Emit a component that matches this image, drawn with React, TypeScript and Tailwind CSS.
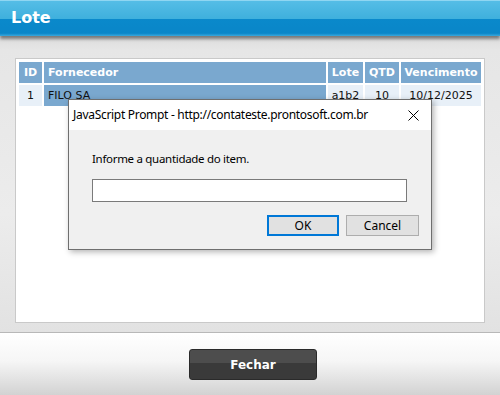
export default function App() {
  return (
    <div className="relative w-[500px] h-[395px] overflow-hidden bg-[#e4e4e4] font-['DejaVu_Sans',sans-serif]">
      {/* header */}
      <div className="relative z-10 h-[36px] border-t border-[#8fd6f2] bg-[linear-gradient(#55bde6_0%,#3fb0dd_50%,#0a89cb_52%,#0a86c8_92%,#3aa8dd_100%)] shadow-[0_3px_3px_rgba(0,0,0,0.45)]">
        <h1 className="pl-[11px] pt-[8px] text-[16px] leading-[18px] font-bold text-white">Lote</h1>
      </div>

      {/* content */}
      <div className="h-[297px] bg-[linear-gradient(#dcdcdc_0px,#e6e6e6_14px,#ececec_60%,#e2e2e2_100%)] px-[15px] pt-[22px] border-b border-[#b8b8b8]">
        <div className="h-[265px] bg-white border border-[#c9c9c9] px-[1px] pt-[1px]">
          <table className="w-full border-separate border-spacing-[2px] text-[11px] leading-[13px]">
            <thead>
              <tr className="text-white font-bold">
                <th className="w-[23px] h-[21px] bg-[#7aa8cf] text-center">ID</th>
                <th className="bg-[#7aa8cf] text-left pl-[4px]">Fornecedor</th>
                <th className="w-[35px] bg-[#7aa8cf] text-center">Lote</th>
                <th className="w-[34px] bg-[#7aa8cf] text-center">QTD</th>
                <th className="w-[80px] bg-[#7aa8cf] text-center">Vencimento</th>
              </tr>
            </thead>
            <tbody>
              <tr className="text-[#111]">
                <td className="h-[21px] bg-[#e8f0f8] text-center">1</td>
                <td className="bg-[#7aa8cf] pl-[4px]">FILO SA</td>
                <td className="bg-[#e8f0f8] text-center">a1b2</td>
                <td className="bg-[#e8f0f8] text-center">10</td>
                <td className="bg-[#e8f0f8] text-center">10/12/2025</td>
              </tr>
            </tbody>
          </table>
        </div>
      </div>

      {/* footer */}
      <div className="h-[62px] bg-[linear-gradient(#ffffff_0%,#f6f6f6_45%,#d2d2d2_100%)] flex justify-center pt-[16px] pl-[6px]">
        <button className="w-[128px] h-[31px] rounded-[3px] border border-[#2a2a2a] bg-[linear-gradient(#4d4d4d_0%,#4d4d4d_45%,#3a3a3a_46%,#3a3a3a_100%)] text-white font-bold text-[12px] font-['DejaVu_Sans',sans-serif]">
          Fechar
        </button>
      </div>

      {/* prompt dialog */}
      <div className="absolute left-[68px] top-[99px] w-[364px] h-[151px] border border-[#6f6f6f] bg-[#f0f0f0] shadow-[2px_2px_6px_rgba(0,0,0,0.3)] font-['Noto_Sans',sans-serif] text-[12px] text-black">
        <div className="h-[30px] bg-white flex items-center justify-between pl-[4px] pr-[12px]">
          <span className="tracking-[-0.3px]">JavaScript Prompt - http://contateste.prontosoft.com.br</span>
          <svg width="11" height="11" viewBox="0 0 11 11" className="stroke-black">
            <path d="M0.5 0.5 L10.5 10.5 M10.5 0.5 L0.5 10.5" strokeWidth="1" />
          </svg>
        </div>
        <div className="px-[23px] pt-[21px]">
          <p className="text-[11.5px] leading-[16px] tracking-[-0.3px]">Informe a quantidade do item.</p>
          <div className="mt-[12px] h-[23px] w-[315px] border border-[#7a7a7a] bg-white" />
          <div className="mt-[13px] flex justify-end gap-[7px] mr-[-11px]">
            <button className="w-[72px] h-[21px] border-2 border-[#0078d7] bg-[#e1e1e1] leading-[17px]">OK</button>
            <button className="w-[73px] h-[21px] border border-[#adadad] bg-[#e1e1e1] leading-[19px]">Cancel</button>
          </div>
        </div>
      </div>
    </div>
  );
}
